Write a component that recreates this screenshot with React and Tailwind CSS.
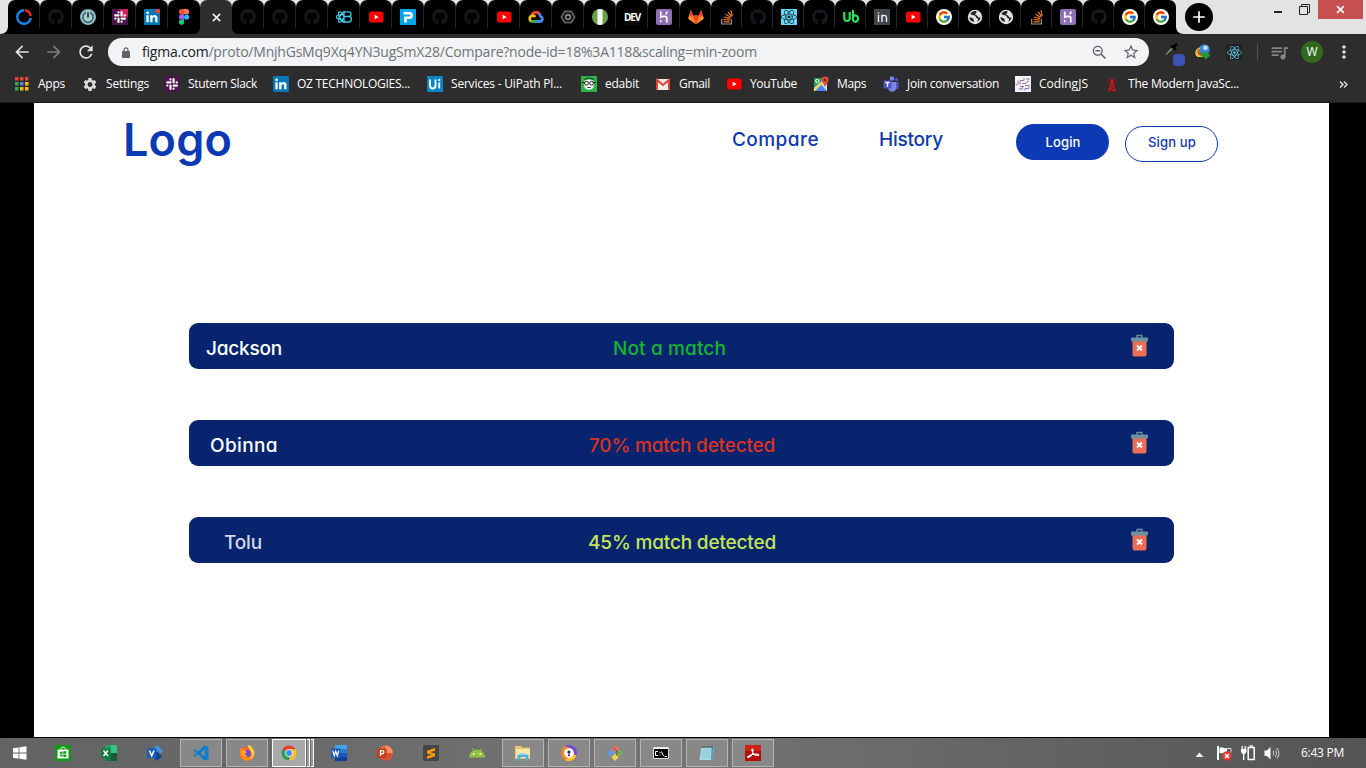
import { useLayoutEffect, useRef } from "react";
import { FaGithub, FaReact } from "react-icons/fa";
import { FcGoogle } from "react-icons/fc";
import { MdSettings, MdStarBorder, MdArrowBack, MdArrowForward, MdRefresh, MdAdd, MdQueueMusic, MdMoreVert } from "react-icons/md";

/* Spreads a label over a given width by adjusting its letter spacing. */
function Fit({ w, className = "", children }) {
  const ref = useRef(null);
  useLayoutEffect(() => {
    const el = ref.current;
    el.style.letterSpacing = "0px";
    const natural = el.getBoundingClientRect().width;
    el.style.letterSpacing = `${(w - natural) / el.textContent.length}px`;
  }, [w]);
  return (
    <span ref={ref} className={`inline-block shrink-0 whitespace-pre ${className}`}>
      {children}
    </span>
  );
}

function Svg({ children, size = 16, className = "" }) {
  return (
    <svg width={size} height={size} viewBox="0 0 16 16" className={`shrink-0 ${className}`} aria-hidden="true">
      {children}
    </svg>
  );
}

const Github = () => <FaGithub size={16} color="#171a1d" />;
const Tube = () => (
  <Svg>
    <rect x="1" y="2.5" width="14.5" height="11" rx="2.6" fill="#f00" />
    <path d="M6.7 5.8v4.4L10.6 8z" fill="#fff" />
  </Svg>
);
const Ring = () => (
  <Svg>
    <path d="M8 1.2A6.8 6.8 0 1 0 14.8 9" fill="none" stroke="#1686ee" strokeWidth="2.4" />
    <path d="M8.8 1.2a6.8 6.8 0 0 1 5.9 6" fill="none" stroke="#f5222d" strokeWidth="2.4" />
  </Svg>
);
const Power = () => (
  <Svg>
    <circle cx="8" cy="8" r="8" fill="#86bcc1" />
    <circle cx="8" cy="8.2" r="5" fill="#a9d0d3" stroke="#3d555b" strokeWidth="1.4" />
    <path d="M8 2v6.8" stroke="#a9d0d3" strokeWidth="4" />
    <path d="M8 3.2v5.6" stroke="#35474d" strokeWidth="2" />
  </Svg>
);
const SlackTile = ({ badge }) => (
  <Svg>
    <path d="M0 0h16v16H0z" fill="#4a154b" />
    {badge && <path d="M8 0h8v8H8z" fill="#cf1f58" />}
    <path
      d="M3.200 6.400h3.300M6.500 3.300v.1M9.600 3v3.400M12.700 6.400h.1M9.600 9.600H13M9.600 12.600v.1M6.500 9.600V13M3.300 9.600h.1"
      fill="none"
      stroke="#fff"
      strokeWidth="2.2"
      strokeLinecap="round"
    />
  </Svg>
);
const LinkedIn = ({ badge }) => (
  <Svg>
    <rect width="16" height="16" rx="1" fill="#0877b5" />
    <g fill="#fff">
      <path d="M2.4 6.2h2.3v7H2.400zM6.200 6.200h2.200v1c1.300-1.900 5.100-1.600 5.100 1.900v4.100h-2.300V9.700c0-2-2.700-2-2.700 0v3.500H6.200z" />
      <circle cx="3.6" cy="3.8" r="1.4" />
    </g>
    {badge && <circle cx="13.8" cy="2.2" r="2.4" fill="#e8403a" />}
  </Svg>
);
const Figma = () => (
  <Svg>
    <path d="M8 0H5.600a2.600 2.600 0 0 0 0 5.300H8z" fill="#f24e1e" />
    <path d="M8 0h2.500a2.600 2.600 0 0 1 0 5.300H8z" fill="#ff7262" />
    <path d="M8 5.300H5.600a2.600 2.600 0 0 0 0 5.300H8z" fill="#a259ff" />
    <circle cx="10.6" cy="8" r="2.600" fill="#1abcfe" />
    <path d="M5.600 10.600H8v2.600a2.600 2.600 0 1 1-2.400-2.600z" fill="#0acf83" />
  </Svg>
);
const ReactBoot = () => (
  <Svg>
    <g fill="none" stroke="#41cbe8" strokeWidth="1.3">
      <ellipse cx="6" cy="8" rx="5.8" ry="2.3" />
      <ellipse cx="6" cy="8" rx="5.8" ry="2.3" transform="rotate(60 6 8)" />
      <ellipse cx="6" cy="8" rx="5.8" ry="2.3" transform="rotate(-60 6 8)" />
      <path d="M8 2.8h4.7c3 0 3 4.7 0 4.7H8zM8 7.5h5c3.2 0 3.2 5.5 0 5.5H8z" fill="#000" />
    </g>
  </Svg>
);
const PTile = () => (
  <Svg>
    <rect width="16" height="16" fill="#00a7e8" />
    <path d="M3.6 3h6.2c4.2 0 4.2 7 0 7H7v3.4H4.2V7.6h5.1c1.4 0 1.4-2.2 0-2.2H3.6z" fill="#fff" />
  </Svg>
);
const Cloud = () => (
  <Svg>
    <g fill="none" strokeWidth="2.8">
      <path d="M4 5.8C5.5 2.6 10 2.2 11.8 5.7" stroke="#ea4335" />
      <path d="M11 4.8c1 .6 1.3 1.6 1.5 2.7 3 1 2.1 5-.8 5H8" stroke="#4285f4" />
      <path d="M8.6 12.5H4.5c-1 0-1.7-.3-2.1-.8" stroke="#34a853" />
      <path d="M3 12.1c-2.2-1.8-1.3-5.3 1.7-5.5 1.2 0 2 .5 2.8 1.2" stroke="#fbbc05" />
    </g>
  </Svg>
);
const Hex = () => (
  <Svg>
    <path d="M4.8 2.4h6.4L14.5 8l-3.3 5.6H4.8L1.5 8z" fill="none" stroke="#5e5e5e" strokeWidth="2" strokeLinejoin="round" />
    <circle cx="8" cy="8" r="2.4" fill="none" stroke="#8b8b8b" strokeWidth="1.6" />
  </Svg>
);
const GreenRound = () => (
  <Svg>
    <circle cx="8" cy="8" r="8" fill="#6aa144" />
    <path d="M5.4.4a9 9 0 0 1 5.2 0v15.2a9 9 0 0 1-5.2 0z" fill="#f3f3f3" />
  </Svg>
);
const Dev = () => (
  <span className="flex h-4 w-4 items-center justify-center bg-[#0a0a0a] font-['Open_Sans',sans-serif] text-[10px] font-bold leading-none text-white">
    <Fit w={16}>DEV</Fit>
  </span>
);
const Heroku = () => (
  <Svg>
    <rect width="16" height="16" rx="2" fill="#9070b5" />
    <path d="M4.8 2.500v5.600c2.400-1.100 6-1.300 6 .8v4.600M11 2.500c0 1.300-.6 2-1.200 2.900" fill="none" stroke="#fff" strokeWidth="1.7" />
    <path d="M4 10.500v3.300l2-1.600z" fill="#fff" />
  </Svg>
);
const Gitlab = () => (
  <Svg>
    <path d="M8 15.2L.3 9.5 2.9 1l2.3 5.6h5.6L13.1 1l2.6 8.5z" fill="#fc6d26" />
    <path d="M8 15.2L5.2 6.6h5.6z" fill="#e24329" />
    <path d="M8 15.2L.3 9.5l.9-2.9zM8 15.2l7.7-5.7-.9-2.9z" fill="#fca326" />
    <path d="M2.9 1L1.1 6.6h4.1zM13.1 1l1.8 5.6h-4.1z" fill="#e24329" />
  </Svg>
);
const Stack = () => (
  <Svg>
    <path d="M2.7 10v5h9.6v-5" fill="none" stroke="#9a9a9a" strokeWidth="1.2" />
    <path d="M4.5 12.8h6.2M4.6 10.5l6.1.7M5.2 8l5.9 1.7M6.6 5.3l5.2 3.2M9 2.8l3.8 4.8M12 1.2l1.2 5.8" stroke="#ef7a22" strokeWidth="1.2" />
  </Svg>
);
const ReactTile = () => (
  <span className="flex size-4 items-center justify-center bg-[#61dafb]">
    <FaReact size={16} color="#1b2a33" />
  </span>
);
const Upwork = () => (
  <Svg>
    <path d="M1.300 3v6c0 4 5.400 4 5.400 0M6.700 3v7.500M10 1v9.300c0 3.600 5 3.300 5-.8 0-3-2.700-3.800-4.500-2.300" fill="none" stroke="#27e35c" strokeWidth="2.2" />
  </Svg>
);
const InTile = () => (
  <Svg>
    <rect width="16" height="16" fill="#3f464c" />
    <path d="M4.5 5.8v7.2M8 13V5.8M8 8c1-2.5 4.5-2.2 4.5 1v4" fill="none" stroke="#fff" strokeWidth="1.3" />
    <path d="M3.2 4h2.3" stroke="#f28a2e" strokeWidth="1.4" />
  </Svg>
);
const Google = () => (
  <span className="flex size-4 items-center justify-center rounded-full bg-white">
    <FcGoogle size={14} />
  </span>
);
const Globe = () => (
  <Svg>
    <circle cx="8" cy="8" r="7.2" fill="#e3e3e3" />
    <path d="M9.500 2.200C6.500 1.600 4.200 3.200 3.500 5c1.300 1.400 2.800.8 4.300 1.500 1.500.7.6 2.300 2.300 2.800 1.400.4 1.400 2.200-.4 3.600 1.900-.4 3.700-2.200 3.800-4.600-1.600.6-2.600-.1-3.100-1.300-.5-1.200-2-.5-2.200-2 0-1 1.900-1 1.300-2.800zM2.200 8.200c1.800.1 3.200.6 4 1.500.8.800.1 2.200 1 3.200-2.600-.1-4.700-2.200-5-4.700z" fill="#222" />
  </Svg>
);

const leftTabs = [Ring, Github, Power, () => <SlackTile badge />, () => <LinkedIn badge />, Figma];
const midTabs = [Github, Github, Github, ReactBoot, Tube, PTile, Github, Github, Tube, Cloud, Hex, GreenRound, Dev, Heroku];
const rightTabs = [Gitlab, Stack, Github, ReactTile, Github, Upwork, InTile, Tube, Google, Globe, Globe, Stack, Heroku, Github, Google, Google];

function Tab({ Icon, wide, last }) {
  return (
    <div className={`relative flex h-[34px] shrink-0 items-center justify-center rounded-t-[7px] bg-black ${wide ? "w-8" : "w-[31px]"}`}>
      <Icon />
      {!last && <span className="absolute right-0 top-[7px] h-[21px] w-px translate-x-1/2 bg-[#4a4a4a]" />}
    </div>
  );
}

function TabStrip() {
  return (
    <div className="flex h-[34px] items-start bg-[#e3e3e3]">
      <Svg size={8} className="mt-[26px]">
        <path d="M16 0v16H0C10 16 16 10 16 0z" fill="#000" />
      </Svg>
      {leftTabs.map((Icon, i) => (
        <Tab key={i} Icon={Icon} wide last={i === leftTabs.length - 1} />
      ))}
      <div className="relative flex h-[34px] w-8 shrink-0 items-center justify-center rounded-t-[7px] bg-[#2d2d2d]">
        <Svg size={9} className="ml-px">
          <path d="M1.5 1.5l13 13M14.500 1.500l-13 13" stroke="#f1f1f1" strokeWidth="2.8" />
        </Svg>
        <Svg size={7} className="absolute bottom-0 right-full">
          <path d="M16 0v16H0C10 16 16 10 16 0z" fill="#2d2d2d" />
        </Svg>
        <Svg size={7} className="absolute bottom-0 left-full z-10">
          <path d="M0 0v16h16C6 16 0 10 0 0z" fill="#2d2d2d" />
        </Svg>
      </div>
      {midTabs.map((Icon, i) => (
        <Tab key={i} Icon={Icon} wide />
      ))}
      {rightTabs.map((Icon, i) => (
        <Tab key={i} Icon={Icon} last={i === rightTabs.length - 1} />
      ))}
      <Svg size={8} className="mt-[26px]">
        <path d="M0 0v16h16C6 16 0 10 0 0z" fill="#000" />
      </Svg>
      <div className="mt-[3px] ml-px flex size-7 shrink-0 items-center justify-center rounded-full bg-black">
        <MdAdd size={20} color="#fff" />
      </div>
      <div className="ml-[61px] mt-[11px] h-0.5 w-2 shrink-0 bg-[#222]" />
      <svg width="11" height="11" viewBox="0 0 11 11" className="ml-[17px] mt-1 shrink-0" aria-hidden="true">
        <path d="M.5 2.5h8v8h-8zM2.500 2.500v-2h8v8h-2" fill="none" stroke="#222" />
      </svg>
      <div className="ml-2 flex h-[19px] w-[45px] shrink-0 items-center justify-center bg-[#c75050]">
        <Svg size={9}>
          <path d="M2 2l12 12M14 2L2 14" stroke="#fff" strokeWidth="3" />
        </Svg>
      </div>
    </div>
  );
}

const IDM = () => (
  <Svg>
    <circle cx="9.5" cy="5.5" r="5.3" fill="#3f83d8" />
    <circle cx="10.5" cy="3.8" r="2.4" fill="#b8dcff" />
    <path d="M5.500 3C0 4.500-1.500 10 2.500 13h6.500l-1-2C4 11 3.500 6 5.500 3z" fill="#e9c636" />
    <path d="M4 4.500C1.500 6.500 2 10.500 5.500 12l1-1.500C4.500 9.500 3.500 7.500 4 4.500z" fill="#d9432c" />
    <path d="M5.500 8.500l5 .5V7l5 4.500-5.500 4.300V13.500c-2 0-4-1-4.500-5z" fill="#1f9e28" />
  </Svg>
);

function Toolbar() {
  return (
    <div className="flex h-[36px] items-center bg-[#2d2d2d]">
      <MdArrowBack size={20} color="#e4e4e4" className="ml-3 shrink-0" />
      <MdArrowForward size={20} color="#7d7d7d" className="ml-3 shrink-0" />
      <MdRefresh size={20} color="#e4e4e4" className="ml-3 shrink-0" />
      <div className="ml-3 flex h-7 w-[1041px] shrink-0 items-center rounded-full bg-[#f1f3f4]">
        <svg width="8" height="11" viewBox="0 0 8 11" className="ml-[14px] mr-3 shrink-0" aria-hidden="true">
          <path d="M2 4.500V2.800a2 2 0 0 1 4 0v1.700" fill="none" stroke="#5f6368" strokeWidth="1.2" />
          <rect y="4" width="8" height="7" rx=".8" fill="#5f6368" />
        </svg>
        <Fit w={615} className="font-['Open_Sans',sans-serif] text-[14px] leading-5 text-[#6f7378]">
          <span className="text-[#202124]">figma.com</span>/proto/MnjhGsMq9Xq4YN3ugSmX28/Compare?node-id=18%3A118&amp;scaling=min-zoom
        </Fit>
        <svg width="15" height="15" viewBox="0 0 15 15" className="ml-auto shrink-0" aria-hidden="true">
          <circle cx="5.8" cy="5.8" r="4.4" fill="none" stroke="#5f6368" strokeWidth="1.4" />
          <path d="M9 9l4.500 4.500M3.500 5.800h4.600" stroke="#5f6368" strokeWidth="1.5" />
        </svg>
        <MdStarBorder size={18} color="#5f6368" className="ml-[15px] mr-[9px] shrink-0" />
      </div>
      <div className="relative ml-[15px] h-5 w-[22px] shrink-0">
        <Svg size={15}>
          <path d="M2 14.5l1-3 6-6.500 1.500 1.500-6.500 6z" fill="#6fa07c" />
          <path d="M8.500 4.500l3 3M10.500 5.500l2.500-3" stroke="#050505" strokeWidth="3" strokeLinecap="round" />
        </Svg>
        <span className="absolute left-[9px] top-3 size-3 rounded-sm bg-[#3f51b5]" />
      </div>
      <span className="ml-[9px] shrink-0"><IDM /></span>
      <span className="ml-[15px] flex size-4 shrink-0 items-center justify-center bg-[#222]">
        <FaReact size={15} color="#5ac8e8" />
      </span>
      <span className="ml-[15px] h-4 w-px shrink-0 bg-[#555]" />
      <MdQueueMusic size={21} color="#858585" className="ml-[11px] shrink-0" />
      <span className="ml-[11px] flex size-[22px] shrink-0 items-center justify-center rounded-full bg-[#33691e] font-['Open_Sans',sans-serif] text-[12px] font-medium text-white">W</span>
      <MdMoreVert size={20} color="#e4e4e4" className="ml-[11px] shrink-0" />
    </div>
  );
}

const AppsGrid = () => (
  <Svg>
    {["#ea4335", "#ea4335", "#ea4335", "#34a853", "#4285f4", "#fbbc05", "#34a853", "#fbbc05", "#fbbc05"].map((c, i) => (
      <rect key={i} x={1 + (i % 3) * 5} y={1 + Math.floor(i / 3) * 5} width="3.5" height="3.5" fill={c} />
    ))}
  </Svg>
);
const UiTile = () => (
  <Svg>
    <rect width="16" height="16" fill="#0a85ca" />
    <path d="M3 3.5v6c0 4 5.500 4 5.500 0v-6M12.200 6.500v6" fill="none" stroke="#fff" strokeWidth="1.9" />
    <circle cx="12.2" cy="4" r="1.2" fill="#fff" />
  </Svg>
);
const Edabit = () => (
  <Svg>
    <rect width="16" height="16" fill="#2db34a" />
    <path d="M3 6.5c-.5-4 10.500-4 10 0l-.5 4.500c-1 3.500-8 3.500-9 0z" fill="#f4f4f4" />
    <path d="M3 4c2-2.500 8-2.500 10 0" fill="none" stroke="#1e5d2b" strokeWidth="1.2" />
    <g fill="none" stroke="#222">
      <circle cx="5.5" cy="7.2" r="1.9" />
      <circle cx="10.5" cy="7.2" r="1.9" />
      <path d="M1 6.5h3M12 6.5h3M6.500 11.500h3" />
    </g>
  </Svg>
);
const Gmail = () => (
  <Svg>
    <path d="M1 3h14v11H1z" fill="#ececec" />
    <path d="M2 13.8V4l6 5 6-5v9.800" fill="none" stroke="#db4437" strokeWidth="2" />
  </Svg>
);
const Maps = () => (
  <Svg>
    <path d="M1 2h13v13H1z" fill="#d9dde2" />
    <path d="M1 2h11L1 12z" fill="#25a35a" />
    <path d="M2 15l6-6.500L14 15z" fill="#4487f5" />
    <path d="M1 14.5L13 3" stroke="#f9cd45" strokeWidth="1.8" />
    <circle cx="4.3" cy="5" r="1.6" fill="none" stroke="#fff" />
    <path d="M12 .5c-4.500 0-4.500 4-2 6.500l2 4 2-4c2.500-2.500 2.500-6.500-2-6.500z" fill="#e14a3d" />
    <circle cx="12" cy="4" r="1.3" fill="#891e16" />
  </Svg>
);
const Teams = () => (
  <Svg>
    <circle cx="9" cy="2.5" r="2.3" fill="#7b83eb" />
    <circle cx="13.5" cy="3.6" r="1.5" fill="#5059c9" />
    <path d="M10 6h5.500v5c0 2.500-3 3-4 1.500z" fill="#5059c9" />
    <path d="M5 6h8v6c0 5-7 5-8 0z" fill="#7b83eb" />
    <path d="M.5 4.500h8v8h-8z" fill="#4b53bc" />
    <path d="M2.3 6.500h4.400M4.500 6.500v4.300" stroke="#fff" strokeWidth="1.3" />
  </Svg>
);
const Coding = () => (
  <Svg>
    <path d="M0 0h16v16H0z" fill="#f5f0f7" />
    <path d="M3 4.500v3c0 2-2 2-2 0M5 8.500v-4h4V2M7 7.500h3c2 0 2-3 4-2.500M11 3h4M5 10.500h4M3.500 13h4v-2M10 9.500h4v3h-4v2" fill="none" stroke="#9a78a4" strokeWidth="1" />
  </Svg>
);
const Tower = () => (
  <Svg>
    <path d="M8 5L4.500 16M8 5l3.500 11M6.800 9l3.400 3M9.200 9l-3.400 3M5.700 12.500l5 2.500" stroke="#c8141e" strokeWidth="1.4" />
    <circle cx="8" cy="4.5" r="1.6" fill="#d5151f" />
    <path d="M5.500 3L3.500 1M5.500 5H2.500M5.500 6.500L3.500 8.500M10.500 3l2-2M10.500 5h3M10.500 6.500l2 2" fill="none" stroke="#a5121b" />
  </Svg>
);

const bookmarks = [
  { Icon: AppsGrid, box: "w-[68px]", label: "Apps", w: 27 },
  { Icon: () => <MdSettings size={17} color="#dcdcdc" />, box: "w-[82px]", label: "Settings", w: 43 },
  { Icon: SlackTile, box: "w-[109px]", label: "Stutern Slack", w: 69 },
  { Icon: LinkedIn, box: "w-[154px]", label: "OZ TECHNOLOGIES...", w: 113 },
  { Icon: UiTile, box: "w-[154px]", label: "Services - UiPath Pl...", w: 111 },
  { Icon: Edabit, box: "w-[74px]", label: "edabit", w: 34 },
  { Icon: Gmail, box: "w-[71px]", label: "Gmail", w: 31 },
  { Icon: Tube, box: "w-[87px]", label: "YouTube", w: 47 },
  { Icon: Maps, box: "w-[70px]", label: "Maps", w: 29 },
  { Icon: Teams, box: "w-[132px]", label: "Join conversation", w: 92 },
  { Icon: Coding, box: "w-[89px]", label: "CodingJS", w: 49 },
  { Icon: Tower, box: "w-[140px]", label: "The Modern JavaSc...", w: 111 },
];

function BookmarksBar() {
  return (
    <div className="flex h-8 items-center bg-[#2d2d2d] pl-3.5 pb-1 font-['Open_Sans',sans-serif] text-[12px] leading-4 text-white">
      {bookmarks.map(({ Icon, box, label, w }) => (
        <div key={label} className={`flex shrink-0 items-center gap-2 ${box}`}>
          <span className="flex w-4 shrink-0 justify-center"><Icon /></span>
          <Fit w={w}>{label}</Fit>
        </div>
      ))}
      <svg width="9" height="7" viewBox="0 0 9 7" className="ml-auto mr-[18px]" aria-hidden="true">
        <path d="M1 .5l3 3-3 3M5 .5l3 3-3 3" fill="none" stroke="#e4e4e4" strokeWidth="1.4" />
      </svg>
    </div>
  );
}

const Trash = () => (
  <svg width="17" height="23" viewBox="0 0 17 23" aria-hidden="true">
    <path d="M6 4V1.500h5V4" fill="none" stroke="#6e8f9e" strokeWidth="1.3" />
    <path d="M1.500 6h14v14.500a2 2 0 0 1-2 2h-10a2 2 0 0 1-2-2z" fill="#ed6e55" />
    <rect y="3.5" width="17" height="4" rx=".8" fill="#6e929f" />
    <path d="M6 11.500l5 5M11 11.500l-5 5" stroke="#fff" strokeWidth="1.8" />
  </svg>
);

const results = [
  { name: "Jackson", nameW: 76, pad: "pl-[17px]", color: "text-white", text: "Not a match", textW: 113, gap: "w-[424px]", tone: "text-[#12b72f]" },
  { name: "Obinna", nameW: 68, pad: "pl-[21px]", color: "text-white", text: "70% match detected", textW: 186, gap: "w-[400px]", tone: "text-[#dc3320]" },
  { name: "Tolu", nameW: 38, pad: "pl-[35px]", color: "text-[#d3d8e6]", text: "45% match detected", textW: 188, gap: "w-[399px]", tone: "text-[#c4e654]" },
];

function Prototype() {
  return (
    <main className="flex h-[635px] justify-center bg-black pl-[34px] pr-[37px] pb-px">
      <div className="w-[1295px] bg-white font-['Inter',sans-serif] [font-feature-settings:'cv11']">
        <header className="flex h-[219px] items-start text-[19px] font-medium leading-none text-[#0c39b4]">
          <Fit w={109} className="ml-[89px] mt-[14px] text-[45px] font-semibold leading-none">Logo</Fit>
          <Fit w={87} className="ml-[500px] mt-[27px]">Compare</Fit>
          <Fit w={64} className="ml-[60px] mt-[27px]">History</Fit>
          <button className="ml-[73px] mt-[21px] flex h-9 w-[93px] items-center justify-center rounded-full bg-[#0c39b4] pt-px pl-px text-[13px] font-medium leading-none text-white">
            <Fit w={35}>Login</Fit>
          </button>
          <button className="ml-4 mt-[22.5px] flex h-[36.5px] w-[93px] items-center justify-center rounded-full border border-[#0c39b4] pb-[2px] pl-px text-[13px] font-medium leading-none">
            <Fit w={48}>Sign up</Fit>
          </button>
        </header>
        <div className="ml-[155px] mt-px flex w-[985px] flex-col gap-[51px]">
          {results.map((r) => (
            <div key={r.name} className="flex h-[46px] items-center rounded-[9px] bg-[#08246f] text-[19px] leading-none">
              <div className={`shrink-0 pt-1 ${r.gap} ${r.pad} ${r.color}`}>
                <Fit w={r.nameW} className="font-medium">{r.name}</Fit>
              </div>
              <Fit w={r.textW} className={`pt-1 font-medium ${r.tone}`}>{r.text}</Fit>
              <span className="ml-auto mr-[26px] pb-0.5"><Trash /></span>
            </div>
          ))}
        </div>
      </div>
    </main>
  );
}

const WinLogo = () => (
  <Svg>
    <path d="M1 3.2l5.600-.8v5.200H1zM7.400 2.300L14.500 1.300v6.300H7.400zM1 8.400h5.600v5.200L1 12.900zM7.400 8.400h7.100v6.300l-7.100-1z" fill="#fff" />
  </Svg>
);
const Store = () => (
  <Svg>
    <path d="M0 0h16v16H0z" fill="#0c9a12" />
    <path d="M5.500 4.500c0-3 5-3 5 0" fill="none" stroke="#fff" />
    <path d="M2.500 4.500h11v9h-11z" fill="#fff" />
    <path d="M5 7l2.600-.4v2.200H5zM8.200 6.500l3-.5v2.800h-3zM5 9.400h2.600v2.200L5 11.200zM8.200 9.400h3v2.800l-3-.5z" fill="#0c9a12" />
  </Svg>
);
const Excel = () => (
  <Svg>
    <path d="M4 0h6v8H4z" fill="#21a366" />
    <path d="M10 0h6v8h-6z" fill="#33c481" />
    <path d="M4 8h6v8H4z" fill="#107c41" />
    <path d="M10 8h6v8h-6z" fill="#185c37" />
    <rect y="3.5" width="9.5" height="9.5" rx="1" fill="#107c41" />
    <path d="M2.500 5.500l4.500 5.500M7 5.500L2.500 11" stroke="#fff" strokeWidth="1.5" />
  </Svg>
);
const Visio = () => (
  <Svg>
    <path d="M10 0l6 6-6 6-6-6z" fill="#4295dd" />
    <path d="M10 6l5 5-5 5-5-5z" fill="#16418f" />
    <rect y="3.5" width="9.5" height="9.5" rx="1" fill="#185abd" />
    <path d="M2.400 5.500l2.300 5.300L7 5.500" fill="none" stroke="#fff" strokeWidth="1.5" />
  </Svg>
);
const Code = () => (
  <Svg>
    <path d="M11.500.3l4 1.700v12l-4 1.700L4.800 9.300 1.600 12 .3 11.200 3.300 8 .3 4.800 1.600 4l3.200 2.700zM11.800 4.500L7.500 8l4.300 3.500z" fill="#0b80d0" fillRule="evenodd" />
  </Svg>
);
const Firefox = () => (
  <Svg>
    <circle cx="8" cy="8.7" r="7.2" fill="#ff5a36" />
    <path d="M1 8C.5 5 2 3 3 2.500c0 1.500 1 2 2 2C6 4 8 4 9 5L6 7l3 5 5-2c-1 8-12 8-13-2z" fill="#ff8a18" />
    <circle cx="8.2" cy="8.5" r="3.5" fill="#7542d6" />
    <path d="M9 0c3 1 4 2 4.500 3.500C17 7 15 14 10 15.500c3-2 3.500-6 2-9C11 4.500 9 3.500 9 0z" fill="#ffd83b" />
    <path d="M3.500 6.500c2-1.500 4 0 4 1L5.500 9l3 2.500c-4 1-6-2-5-5z" fill="#ffb31f" />
  </Svg>
);
const Chrome = () => (
  <Svg>
    <path d="M8 8L1.500 4.200A7.500 7.500 0 0 1 14.500 4.200z" fill="#e34133" />
    <path d="M8 8v7.500A7.500 7.500 0 0 1 1.500 4.200z" fill="#30a04f" />
    <path d="M8 4.200h6.500A7.500 7.500 0 0 1 8 15.500l3.300-5.600z" fill="#fbc116" />
    <circle cx="8" cy="8" r="3.7" fill="#fff" />
    <circle cx="8" cy="8" r="2.9" fill="#4285f4" />
  </Svg>
);
const Word = () => (
  <Svg>
    <path d="M4 0h12v4H4z" fill="#41a5ee" />
    <path d="M4 4h12v4H4z" fill="#2b7cd3" />
    <path d="M4 8h12v4H4z" fill="#185abd" />
    <path d="M4 12h12v4H4z" fill="#103f91" />
    <rect y="3.5" width="9.5" height="9.5" rx="1" fill="#185abd" />
    <path d="M1.700 5.700l1.500 5 1.500-4.500 1.600 4.500 1.500-5" fill="none" stroke="#fff" strokeWidth="1.2" />
  </Svg>
);
const PowerPoint = () => (
  <Svg>
    <circle cx="8.5" cy="8" r="7.5" fill="#ed6c47" />
    <path d="M8.500.5A7.500 7.500 0 0 1 16 8H8.500z" fill="#ff8f6b" />
    <path d="M1 8h15a7.500 7.500 0 0 1-15 0z" fill="#d35230" />
    <rect y="3.5" width="9.5" height="9.5" rx="1" fill="#c43e1c" />
    <path d="M3.500 11V5.700h1.700c2.200 0 2.200 3.200 0 3.200H3.500" fill="none" stroke="#fff" strokeWidth="1.3" />
  </Svg>
);
const Sublime = () => (
  <Svg>
    <rect width="16" height="16" rx="1" fill="#474747" />
    <path d="M12 3v2.800L7.500 7.200 12 8.500v2.800L4 14v-2.800L8.500 9.800 4 8.500V5.700z" fill="#ff9800" />
  </Svg>
);
const Droid = () => (
  <Svg>
    <path d="M0 12.500a8 8 0 0 1 16 0z" fill="#96c13f" />
    <path d="M3 3l2.300 3.500M13 3l-2.300 3.500" stroke="#96c13f" />
    <circle cx="4.7" cy="9" r=".9" fill="#fff" />
    <circle cx="11.3" cy="9" r=".9" fill="#fff" />
  </Svg>
);
const Explorer = () => (
  <Svg>
    <path d="M0 1h6l1 1.500h8V14H0z" fill="#e8c96f" />
    <path d="M1 4h14v9H1z" fill="#f8e7a6" />
    <path d="M2.500 15.500V10c0-2 11-2 11 0v5.500h-3V12h-5v3.500z" fill="#4db0e4" />
    <path d="M3 9.800c1-1 9-1 10 0" stroke="#c0e8fa" fill="none" />
  </Svg>
);
const AvastBrowser = () => (
  <Svg>
    <circle cx="8" cy="8" r="8" fill="#f38a25" />
    <path d="M4 1a8 8 0 0 1 12 7c0 1-.5 3-1 4L11 4z" fill="#7047df" />
    <path d="M15.500 10A8 8 0 0 1 4 15l5-4z" fill="#ffc530" />
    <circle cx="8" cy="8" r="4.8" fill="#fff" />
    <circle cx="8" cy="7" r="1.6" fill="#38214a" />
    <path d="M8 7l1 4H7z" fill="#38214a" />
  </Svg>
);
const GitBash = () => (
  <Svg>
    <path d="M8 0l3.700 3.700L8 7.500 4.300 3.700z" fill="#ed6b62" />
    <path d="M3.700 4.300L7.500 8l-3.800 3.700L0 8z" fill="#5a9be8" />
    <path d="M12.300 4.300L16 8l-3.700 3.700L8.500 8z" fill="#7ab34b" />
    <path d="M8 8.500l3.700 3.800L8 16l-3.700-3.700z" fill="#f3cf58" />
    <path d="M6.500 2.500l3 3v5M10 6l2.500 2.500" fill="none" stroke="#666" />
  </Svg>
);
const Console = () => (
  <Svg>
    <path d="M.5 2.500h15v11H.5z" fill="#000" stroke="#ddd" />
    <path d="M1 2h14v2H1z" fill="#eee" />
    <path d="M5 6.500H2.500v4H5M7 7v1M7 9.500v1M8.500 6.500l2 4.500M11.500 11.500H14" fill="none" stroke="#fff" />
  </Svg>
);
const Notepad = () => (
  <Svg>
    <path d="M2.500 1.500H15L13.500 15H.5z" fill="#a7dce8" />
    <path d="M12.500 2H15l-1.500 13h-1.500z" fill="#4d9fb8" />
    <path d="M3 1v2M5 1v2M7 1v2M9 1v2M11 1v2M13 1v2" stroke="#333" />
    <path d="M3 5h9M3 7h9M2.500 9h9M2.500 11h9M2.500 13h9" stroke="#76b7c8" strokeWidth=".6" />
  </Svg>
);
const Acrobat = () => (
  <Svg>
    <path d="M0 0h16v16H0z" fill="#b80c0c" />
    <path d="M0 0h16v6H0z" fill="#d0201a" />
    <path d="M3 12.500c3-1 5-4 5-7 0-2-1.500-2-1 0 .8 3 3 5 5.500 5 2 0 1.500-1.500-.5-1.500-3 0-7 1-9 2.500-.8.700-.5 1.200 0 1z" fill="none" stroke="#fff" strokeWidth="1.1" />
  </Svg>
);

const taskItems = [
  { Icon: Store }, { Icon: Excel }, { Icon: Visio },
  { Icon: Code, open: true }, { Icon: Firefox, open: true }, { Icon: Chrome, stacked: true },
  { Icon: Word }, { Icon: PowerPoint }, { Icon: Sublime }, { Icon: Droid },
  { Icon: Explorer, open: true }, { Icon: AvastBrowser, open: true }, { Icon: GitBash, open: true },
  { Icon: Console, open: true }, { Icon: Notepad, open: true }, { Icon: Acrobat, open: true },
];

function TaskItem({ Icon, open, stacked }) {
  if (stacked) {
    return (
      <div className="flex h-[30px] w-[46px] shrink-0 items-center pl-0.5">
        <div className="flex h-7 w-[34px] items-center justify-center border border-white bg-[#a9a9a9]"><Icon /></div>
        <div className="ml-px h-7 w-[3px] border-y border-r border-white bg-[#999]" />
        <div className="ml-px h-7 w-[3px] border-y border-r border-white bg-[#999]" />
      </div>
    );
  }
  return (
    <div className="flex h-[30px] w-[46px] shrink-0 items-center justify-center">
      <div className={`flex h-7 w-[42px] items-center justify-center border ${open ? "border-[#b4b4b4] bg-[#888]" : "border-transparent"}`}><Icon /></div>
    </div>
  );
}

function Taskbar() {
  return (
    <footer className="flex h-[30px] items-center bg-linear-to-r from-[#636363] via-[#747474] to-[#545454]">
      <span className="flex w-10 shrink-0 justify-center"><WinLogo /></span>
      {taskItems.map((item, i) => <TaskItem key={i} {...item} />)}
      <div className="ml-auto mr-[22px] flex items-center">
        <svg width="9" height="5" viewBox="0 0 9 5" className="mt-0.5" aria-hidden="true"><path d="M.5 5L4.500.5 8.500 5z" fill="#eee" /></svg>
        <Svg className="ml-3">
          <path d="M2 1v14" stroke="#fff" strokeWidth="2" />
          <path d="M3.500 3c2.500-2 4.500 1.500 7.500 0v5.500c-3 1.500-5-1.500-7.500 0z" fill="#fff" />
          <path d="M11 3.500h4v4" fill="none" stroke="#ddd" />
          <circle cx="11" cy="11" r="4.8" fill="#e23b32" />
          <path d="M9 9l4 4M13 9l-4 4" stroke="#fff" strokeWidth="1.5" />
        </Svg>
        <Svg className="ml-2">
          <path d="M8.200 2.500h6v12h-6z" fill="none" stroke="#fff" strokeWidth="1.5" />
          <path d="M9.500 1h3.500" stroke="#fff" strokeWidth="1.4" />
          <path d="M2.200 1v4M5.200 1v4M3.700 8v7" stroke="#fff" strokeWidth="1.3" />
          <path d="M1 4h5.500v3L5 9H2.500L1 7z" fill="#fff" />
        </Svg>
        <Svg className="ml-2">
          <path d="M.5 5.500h2.500L6.500 2v12.500L3 11H.5z" fill="#fff" />
          <path d="M9 6c1 1 1 3.500 0 4.500M11 4.500c2 2 2 5.500 0 7.500M13 3c2.500 3 2.500 7.500 0 10.500" fill="none" stroke="#ddd" />
        </Svg>
        <Fit w={43} className="ml-[21px] font-['Open_Sans',sans-serif] text-[12px] leading-4 text-white">6:43 PM</Fit>
      </div>
    </footer>
  );
}

export default function App() {
  return (
    <div className="flex h-[768px] w-[1366px] flex-col overflow-hidden bg-black">
      <TabStrip />
      <Toolbar />
      <div className="border-b border-[#1c1c1c]">
        <BookmarksBar />
      </div>
      <Prototype />
      <Taskbar />
    </div>
  );
}
